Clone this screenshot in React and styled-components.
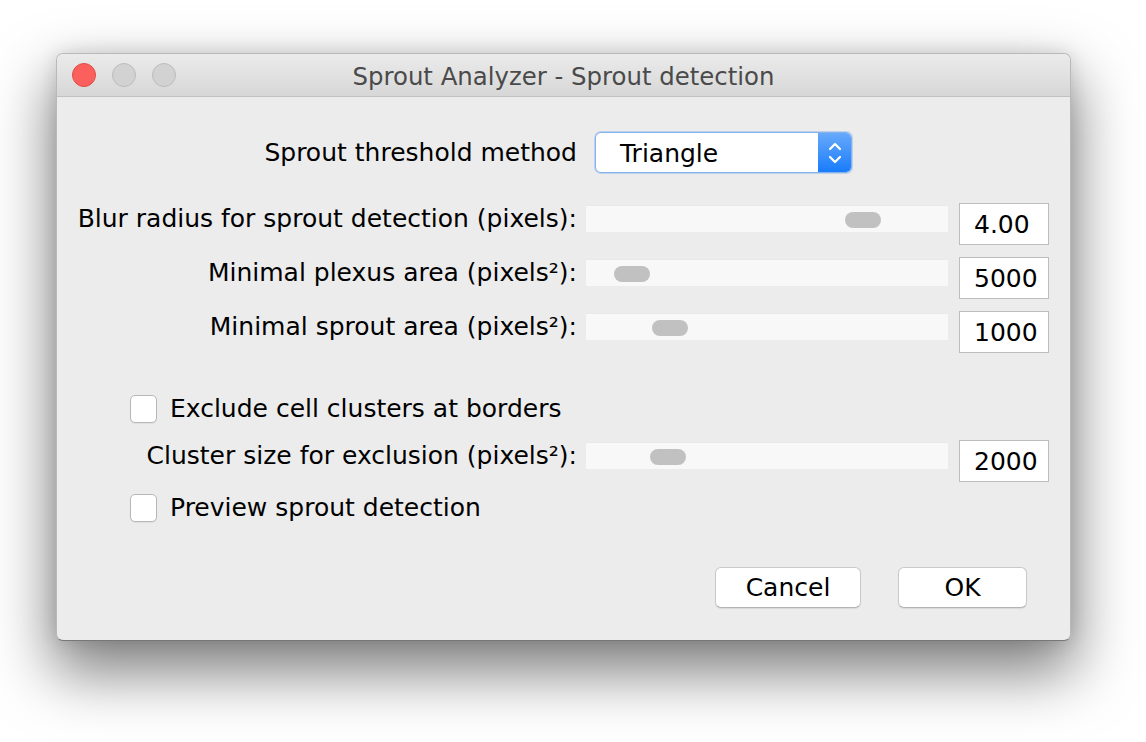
import styled, { createGlobalStyle } from 'styled-components';

const GlobalStyle = createGlobalStyle`
  html, body {
    margin: 0;
    padding: 0;
    background: #fff;
  }
  body {
    font-family: "DejaVu Sans", "Liberation Sans", sans-serif;
  }
`;

const Page = styled.div`
  box-sizing: border-box;
  min-height: 742px;
  padding: 53px 0 0 56px;
  overflow: hidden;
`;

const Window = styled.div`
  width: 1015px;
  box-sizing: border-box;
  border: 1px solid #b9b9b9;
  border-bottom-color: #777;
  border-radius: 7px;
  background: #ececec;
  box-shadow: 0 28px 60px 4px rgba(0, 0, 0, 0.5), 0 0 18px rgba(0, 0, 0, 0.12);
  overflow: hidden;
`;

const TitleBar = styled.div`
  height: 42px;
  display: grid;
  grid-template-columns: 1fr auto 1fr;
  align-items: center;
  background: linear-gradient(#ebebeb, #d7d7d7);
  border-bottom: 1px solid #c1c1c1;
`;

const Lights = styled.div`
  display: flex;
  gap: 16px;
  padding-left: 15px;
`;

const Light = styled.span`
  width: 24px;
  height: 24px;
  box-sizing: border-box;
  border-radius: 50%;
  background: ${(p) => (p.$red ? '#fc605c' : '#d2d2d2')};
  border: 1px solid ${(p) => (p.$red ? '#de4c46' : '#bcbcbc')};
`;

const Title = styled.div`
  font-size: 24.4px;
  color: #4a4a4a;
  white-space: nowrap;
  padding-top: 2px;
`;

const Body = styled.div`
  padding: 35px 0 32px 0;
  color: #000;
  font-size: 25px;
`;

const ThresholdRow = styled.div`
  display: grid;
  grid-template-columns: 520px auto;
  column-gap: 18px;
  align-items: center;
`;

const Label = styled.div`
  text-align: right;
  white-space: nowrap;
  line-height: 27px;
  margin-top: ${(p) => (p.$top ? '2px' : '0')};
`;

const Select = styled.div`
  width: 257px;
  height: 41px;
  box-sizing: border-box;
  display: flex;
  border: 1px solid #84b2ee;
  border-radius: 6px;
  box-shadow: 0 0 0 1px rgba(110, 160, 230, 0.35);
  background: #fff;
  overflow: hidden;
`;

const SelectText = styled.div`
  flex: 1;
  padding-left: 24px;
  line-height: 41px;
`;

const SelectArrows = styled.div`
  width: 33px;
  display: flex;
  align-items: center;
  justify-content: center;
  background: linear-gradient(#67a9fc, #197cfb);
`;

const SliderRow = styled.div`
  display: grid;
  grid-template-columns: 520px 362px 92px;
  column-gap: 9px;
  align-items: start;
  margin-top: ${(p) => p.$mt}px;
`;

const Track = styled.div`
  position: relative;
  height: 27px;
  margin-top: 2px;
  background: #f8f8f8;
  border-top: 1px solid #e9e9e9;
  box-sizing: border-box;
`;

const Thumb = styled.div`
  position: absolute;
  top: 6px;
  width: 36px;
  height: 16px;
  border-radius: 8px;
  background: #c1c1c1;
`;

const Field = styled.div`
  height: 42px;
  margin-left: 2px;
  box-sizing: border-box;
  border: 1px solid #bdbdbd;
  background: #fff;
  padding-left: 14px;
  line-height: 42px;
`;

const CheckRow = styled.label`
  display: flex;
  align-items: center;
  gap: 13px;
  padding-left: 73px;
  margin-top: ${(p) => p.$mt}px;
  line-height: 29px;
`;

const Box = styled.span`
  width: 27px;
  height: 28px;
  box-sizing: border-box;
  border: 1px solid #b7b7b7;
  border-radius: 5px;
  background: #fff;
  box-shadow: 0 1px 1px rgba(0, 0, 0, 0.06);
`;

const Buttons = styled.div`
  display: flex;
  justify-content: flex-end;
  gap: 37px;
  padding-right: 43px;
  margin-top: 45px;
`;

const Button = styled.div`
  width: ${(p) => p.$w}px;
  height: 41px;
  box-sizing: border-box;
  border: 1px solid #c9c9c9;
  border-bottom-color: #b3b3b3;
  border-radius: 6px;
  background: #fff;
  box-shadow: 0 1px 1px rgba(0, 0, 0, 0.08);
  text-align: center;
  line-height: 39px;
`;

const Arrows = () => (
  <svg width="16" height="26" viewBox="0 0 16 26">
    <path d="M3 9 L8 4 L13 9" fill="none" stroke="#fff" strokeWidth="2.2" strokeLinecap="round" strokeLinejoin="round" />
    <path d="M3 17 L8 22 L13 17" fill="none" stroke="#fff" strokeWidth="2.2" strokeLinecap="round" strokeLinejoin="round" />
  </svg>
);

const sliders = [
  { label: 'Blur radius for sprout detection (pixels):', pos: 259, value: '4.00', mt: 30 },
  { label: 'Minimal plexus area (pixels²):', pos: 28, value: '5000', mt: 12 },
  { label: 'Minimal sprout area (pixels²):', pos: 66, value: '1000', mt: 12 },
];

const Slider = ({ label, pos, value, mt }) => (
  <SliderRow $mt={mt}>
    <Label $top>{label}</Label>
    <Track>
      <Thumb style={{ left: pos }} />
    </Track>
    <Field>{value}</Field>
  </SliderRow>
);

export default function App() {
  return (
    <>
      <GlobalStyle />
      <Page>
        <Window>
          <TitleBar>
            <Lights>
              <Light $red />
              <Light />
              <Light />
            </Lights>
            <Title>Sprout Analyzer - Sprout detection</Title>
            <div />
          </TitleBar>
          <Body>
            <ThresholdRow>
              <Label>Sprout threshold method</Label>
              <Select>
                <SelectText>Triangle</SelectText>
                <SelectArrows>
                  <Arrows />
                </SelectArrows>
              </Select>
            </ThresholdRow>
            {sliders.map((s) => (
              <Slider key={s.label} {...s} />
            ))}
            <CheckRow $mt={41}>
              <Box />
              Exclude cell clusters at borders
            </CheckRow>
            <Slider label="Cluster size for exclusion (pixels²):" pos={64} value="2000" mt={17} />
            <CheckRow $mt={11}>
              <Box />
              Preview sprout detection
            </CheckRow>
            <Buttons>
              <Button $w={146}>Cancel</Button>
              <Button $w={129}>OK</Button>
            </Buttons>
          </Body>
        </Window>
      </Page>
    </>
  );
}
